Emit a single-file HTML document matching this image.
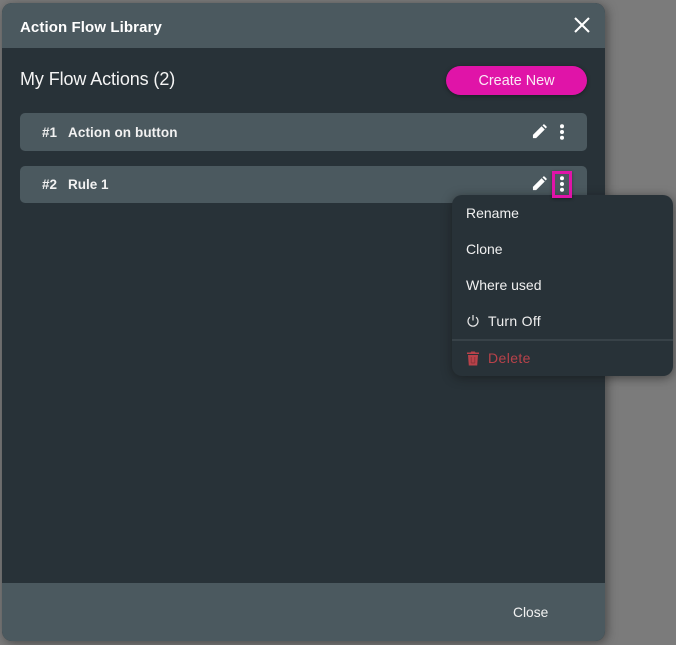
<!DOCTYPE html>
<html>
<head>
<meta charset="utf-8">
<style>
html,body{margin:0;padding:0;width:676px;height:645px;overflow:hidden;background:#7b7b7b;font-family:"Liberation Sans",sans-serif;color:#fff}
.a{position:absolute;white-space:nowrap}
#modal{left:2px;top:3px;width:603px;height:638px;background:#283238;border-radius:10px;overflow:hidden;box-shadow:2px 2px 10px rgba(40,40,40,.6)}
#hdr{left:0;top:0;width:603px;height:45px;background:#4b595f}
#ftr{left:0;top:580px;width:603px;height:58px;background:#4b595f}
.row{left:20px;width:567px;background:#4b595f;border-radius:5px}
.t{font-weight:bold;font-size:13.5px;line-height:16px;color:#f2f2f2}
.m{font-size:14px;line-height:16px;color:#f0f0f0}
#menu{left:452px;top:195px;width:220.5px;height:181px;background:#283238;border-radius:10px;box-shadow:0 2px 10px rgba(20,20,20,.55)}
</style>
</head>
<body>
<div class="a" id="modal">
  <div class="a" id="hdr"></div>
  <div class="a" id="ftr"></div>
</div>
<div class="a" style="left:20px;top:18px;font-size:15px;line-height:18px;font-weight:bold;letter-spacing:.1px;padding-top:.5px">Action Flow Library</div>
<svg class="a" style="left:573px;top:16px" width="18" height="18" viewBox="0 0 18 18"><path d="M2 2L16 16M16 2L2 16" stroke="#fff" stroke-width="2.1" fill="none"/></svg>
<div class="a" style="left:20px;top:69px;font-size:18px;line-height:21px;color:#f4f4f4;letter-spacing:-.1px">My Flow Actions (2)</div>
<div class="a" style="left:446px;top:66px;width:141px;height:29px;border-radius:15px;background:#e014a8;box-shadow:0 1px 4px rgba(0,0,0,.4);text-align:center;font-size:14.4px;line-height:31px;color:#fbe9f6">Create New</div>

<div class="a row" style="top:113px;height:38px"></div>
<div class="a t" style="left:42px;top:125px">#1</div>
<div class="a t" style="left:68px;top:125px;letter-spacing:.1px">Action on button</div>
<svg class="a" style="left:532px;top:124px" width="15" height="15" viewBox="0 0 16 16"><path d="M1 15V11.6L10.2 2.4L13.6 5.8L4.4 15ZM11.2 1.4L12.1 .5Q12.7 0 13.3 .5L15.5 2.7Q16 3.3 15.5 3.9L14.6 4.8Z" fill="#fff"/></svg>
<svg class="a" style="left:558px;top:124px" width="8" height="16" viewBox="0 0 8 16"><circle cx="4" cy="2.3" r="2" fill="#fff"/><circle cx="4" cy="8" r="2" fill="#fff"/><circle cx="4" cy="13.7" r="2" fill="#fff"/></svg>

<div class="a row" style="top:166px;height:37px"></div>
<div class="a t" style="left:42px;top:177px">#2</div>
<div class="a t" style="left:68px;top:177px">Rule 1</div>
<svg class="a" style="left:532px;top:176px" width="15" height="15" viewBox="0 0 16 16"><path d="M1 15V11.6L10.2 2.4L13.6 5.8L4.4 15ZM11.2 1.4L12.1 .5Q12.7 0 13.3 .5L15.5 2.7Q16 3.3 15.5 3.9L14.6 4.8Z" fill="#fff"/></svg>

<div class="a" id="menu">
  <div class="a" style="left:0;top:144px;width:220.5px;height:2px;background:#384248"></div>
</div>
<div class="a" style="left:552px;top:171px;width:13.5px;height:20.5px;border:3px solid #e014a8;box-shadow:0 1px 3px rgba(0,0,0,.4)"></div>
<svg class="a" style="left:558px;top:176px" width="8" height="16" viewBox="0 0 8 16"><circle cx="4" cy="2.3" r="2" fill="#fff"/><circle cx="4" cy="8" r="2" fill="#fff"/><circle cx="4" cy="13.7" r="2" fill="#fff"/></svg>

<div class="a m" style="left:466px;top:205px">Rename</div>
<div class="a m" style="left:466px;top:241px">Clone</div>
<div class="a m" style="left:466px;top:277px">Where used</div>
<svg class="a" style="left:466px;top:314px" width="14" height="14" viewBox="0 0 14 14"><path d="M4 3.2A5 5 0 1 0 10 3.2M7 1V6.5" stroke="#e6e6e6" stroke-width="1.2" fill="none"/></svg>
<div class="a m" style="left:488px;top:313px;letter-spacing:.3px">Turn Off</div>
<svg class="a" style="left:466px;top:351px" width="14" height="15" viewBox="0 0 14 15"><path d="M1 1.5H4.5L5.2 .5H8.8L9.5 1.5H13V3H1ZM2 4H12L11.2 14.5H2.8Z" fill="#b8424a"/><path d="M5.2 6V12M8.8 6V12M5.2 12H8.8" stroke="#8a3238" stroke-width=".9" fill="none"/></svg>
<div class="a m" style="left:488px;top:350px;color:#b8424a;letter-spacing:.4px">Delete</div>
<div class="a" style="left:513px;top:605px;font-size:13.8px;line-height:16px;color:#f2f2f2">Close</div>
</body>
</html>
